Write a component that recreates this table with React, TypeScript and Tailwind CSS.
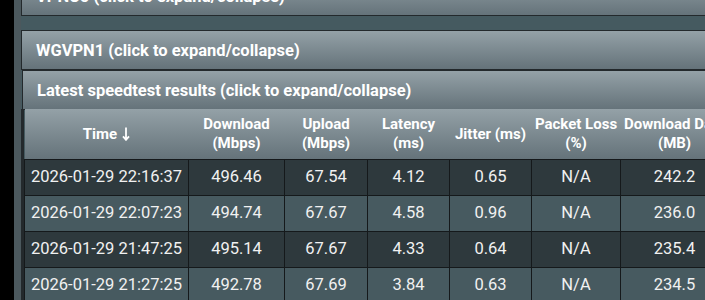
import React from 'react';

const COLS = [
  { label: ['Time'], w: 164, arrow: true },
  { label: ['Download', '(Mbps)'], w: 96 },
  { label: ['Upload', '(Mbps)'], w: 83 },
  { label: ['Latency', '(ms)'], w: 82 },
  { label: ['Jitter (ms)'], w: 82 },
  { label: ['Packet Loss', '(%)'], w: 89 },
  { label: ['Download Data', '(MB)'], w: 108 },
  { label: ['Upload Data', '(MB)'], w: 100 },
];

const ROWS = [
  ['2026-01-29 22:16:37', '496.46', '67.54', '4.12', '0.65', 'N/A', '242.2', '30.1'],
  ['2026-01-29 22:07:23', '494.74', '67.67', '4.58', '0.96', 'N/A', '236.0', '30.3'],
  ['2026-01-29 21:47:25', '495.14', '67.67', '4.33', '0.64', 'N/A', '235.4', '30.2'],
  ['2026-01-29 21:27:25', '492.78', '67.69', '3.84', '0.63', 'N/A', '234.5', '30.2'],
];

function SectionHeader({ title }: { title: string }) {
  return (
    <div className="flex h-[40px] shrink-0 items-center border border-[#23292c] bg-gradient-to-b from-[#94a1a7] to-[#65737a] pt-[2px] pl-[14px] text-[16.5px] font-bold whitespace-nowrap text-white">
      {title}
    </div>
  );
}

function DownArrow() {
  return (
    <svg width="8" height="14" viewBox="0 0 8 14" className="ml-[5px] inline-block align-[-2px]">
      <path d="M4 0.5V12.5M1 9.3L4 12.8L7 9.3" fill="none" stroke="#fff" strokeWidth="1.8" />
    </svg>
  );
}

export default function App() {
  return (
    <div
      className="flex h-[300px] w-[705px] items-start overflow-hidden bg-black"
      style={{ fontFamily: 'Roboto, "Liberation Sans", sans-serif' }}
    >
      <div className="h-full w-[14px] shrink-0 bg-black" />
      <div className="h-full w-[7px] shrink-0 bg-[#4b585d]" />
      <div className="flex min-h-[300px] w-[800px] shrink-0 flex-col bg-[#455a60]">
        <div className="-mt-[24px] shrink-0">
          <SectionHeader title="VPNC5 (click to expand/collapse)" />
        </div>
        <div className="h-[14px] shrink-0" />
        <SectionHeader title="WGVPN1 (click to expand/collapse)" />
        <div className="shrink-0 pl-px">
          <SectionHeader title="Latest speedtest results (click to expand/collapse)" />
        </div>
        <div className="-mt-px shrink-0 border-l-[3px] border-[#23292c]">
          <table className="w-[804px] table-fixed border-collapse text-center whitespace-nowrap">
            <colgroup>
              {COLS.map((c) => (
                <col key={c.label.join()} style={{ width: c.w }} />
              ))}
            </colgroup>
            <thead>
              <tr className="h-[50px] bg-gradient-to-b from-[#94a1a7] to-[#65737a]">
                {COLS.map((c) => (
                  <th
                    key={c.label.join()}
                    className="p-0 pt-px align-middle text-[15px] leading-[19px] font-bold text-white"
                  >
                    {c.label.map((l) => (
                      <div key={l}>
                        {l}
                        {c.arrow && <DownArrow />}
                      </div>
                    ))}
                  </th>
                ))}
              </tr>
            </thead>
            <tbody>
              {ROWS.map((r, i) => (
                <tr
                  key={r[0]}
                  className={`h-[36px] ${i % 2 === 0 ? 'bg-[#2e393d]' : 'bg-[#475a60]'}`}
                >
                  {r.map((v, j) => (
                    <td
                      key={j}
                      className="border border-[#15191b] p-0 text-[16.5px] text-[#f1f1f1]"
                    >
                      {v}
                    </td>
                  ))}
                </tr>
              ))}
            </tbody>
          </table>
        </div>
      </div>
    </div>
  );
}
